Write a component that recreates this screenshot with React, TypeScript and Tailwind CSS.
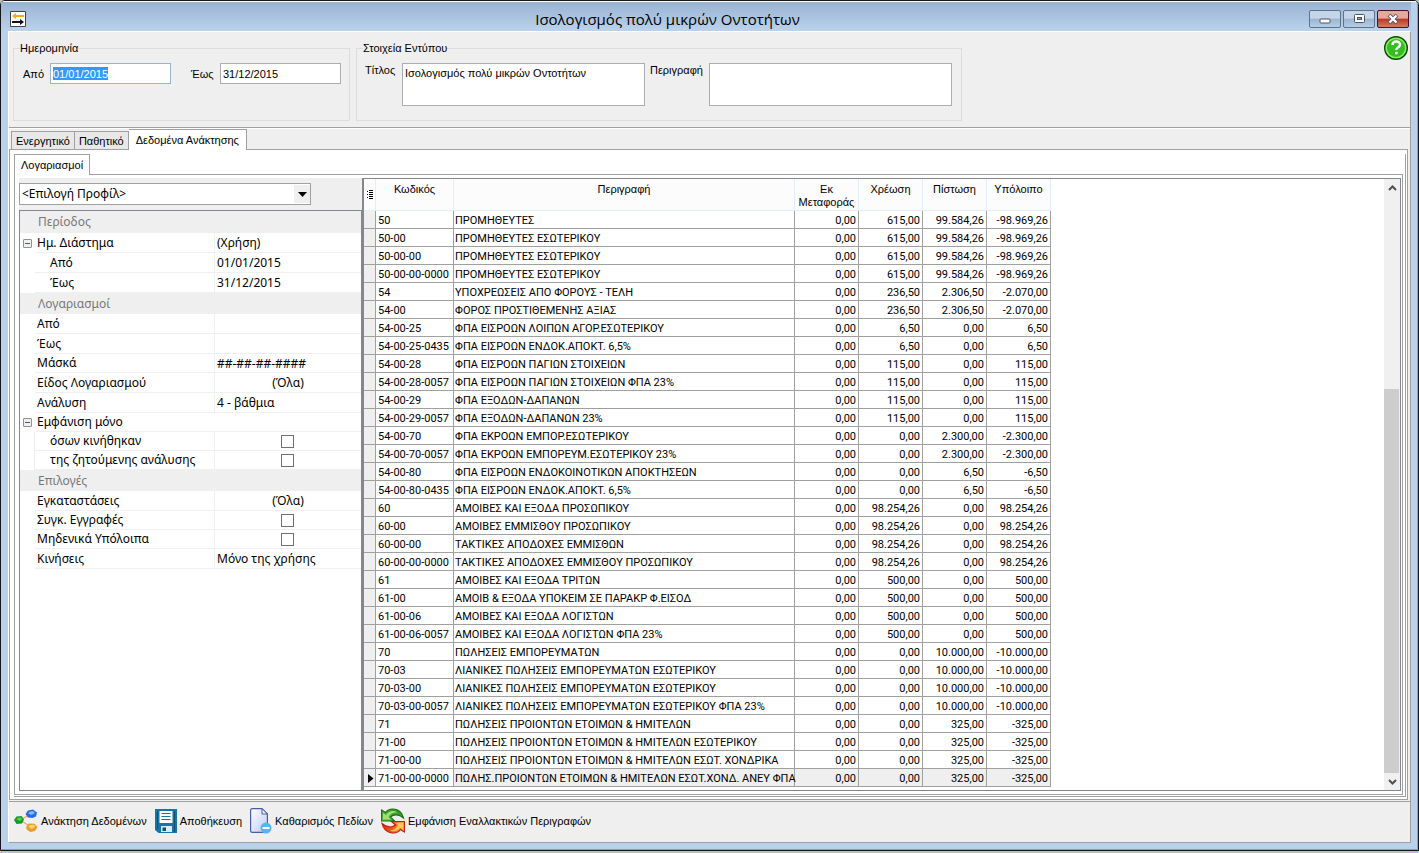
import type { ReactNode } from "react";

type Account = [code: string, name: string, debit: string, credit: string, balance: string];

const ACCOUNTS: Account[] = [
  ["50", "ΠΡΟΜΗΘΕΥΤΕΣ", "615,00", "99.584,26", "-98.969,26"],
  ["50-00", "ΠΡΟΜΗΘΕΥΤΕΣ ΕΣΩΤΕΡΙΚΟΥ", "615,00", "99.584,26", "-98.969,26"],
  ["50-00-00", "ΠΡΟΜΗΘΕΥΤΕΣ ΕΣΩΤΕΡΙΚΟΥ", "615,00", "99.584,26", "-98.969,26"],
  ["50-00-00-0000", "ΠΡΟΜΗΘΕΥΤΕΣ ΕΣΩΤΕΡΙΚΟΥ", "615,00", "99.584,26", "-98.969,26"],
  ["54", "ΥΠΟΧΡΕΩΣΕΙΣ ΑΠΟ ΦΟΡΟΥΣ - ΤΕΛΗ", "236,50", "2.306,50", "-2.070,00"],
  ["54-00", "ΦΟΡΟΣ ΠΡΟΣΤΙΘΕΜΕΝΗΣ ΑΞΙΑΣ", "236,50", "2.306,50", "-2.070,00"],
  ["54-00-25", "ΦΠΑ ΕΙΣΡΟΩΝ ΛΟΙΠΩΝ ΑΓΟΡ.ΕΣΩΤΕΡΙΚΟΥ", "6,50", "0,00", "6,50"],
  ["54-00-25-0435", "ΦΠΑ ΕΙΣΡΟΩΝ ΕΝΔΟΚ.ΑΠΟΚΤ. 6,5%", "6,50", "0,00", "6,50"],
  ["54-00-28", "ΦΠΑ ΕΙΣΡΟΩΝ ΠΑΓΙΩΝ ΣΤΟΙΧΕΙΩΝ", "115,00", "0,00", "115,00"],
  ["54-00-28-0057", "ΦΠΑ ΕΙΣΡΟΩΝ ΠΑΓΙΩΝ ΣΤΟΙΧΕΙΩΝ ΦΠΑ 23%", "115,00", "0,00", "115,00"],
  ["54-00-29", "ΦΠΑ ΕΞΟΔΩΝ-ΔΑΠΑΝΩΝ", "115,00", "0,00", "115,00"],
  ["54-00-29-0057", "ΦΠΑ ΕΞΟΔΩΝ-ΔΑΠΑΝΩΝ 23%", "115,00", "0,00", "115,00"],
  ["54-00-70", "ΦΠΑ ΕΚΡΟΩΝ ΕΜΠΟΡ.ΕΣΩΤΕΡΙΚΟΥ", "0,00", "2.300,00", "-2.300,00"],
  ["54-00-70-0057", "ΦΠΑ ΕΚΡΟΩΝ ΕΜΠΟΡΕΥΜ.ΕΣΩΤΕΡΙΚΟΥ 23%", "0,00", "2.300,00", "-2.300,00"],
  ["54-00-80", "ΦΠΑ ΕΙΣΡΟΩΝ ΕΝΔΟΚΟΙΝΟΤΙΚΩΝ ΑΠΟΚΤΗΣΕΩΝ", "0,00", "6,50", "-6,50"],
  ["54-00-80-0435", "ΦΠΑ ΕΙΣΡΟΩΝ ΕΝΔΟΚ.ΑΠΟΚΤ. 6,5%", "0,00", "6,50", "-6,50"],
  ["60", "ΑΜΟΙΒΕΣ ΚΑΙ ΕΞΟΔΑ ΠΡΟΣΩΠΙΚΟΥ", "98.254,26", "0,00", "98.254,26"],
  ["60-00", "ΑΜΟΙΒΕΣ ΕΜΜΙΣΘΟΥ ΠΡΟΣΩΠΙΚΟΥ", "98.254,26", "0,00", "98.254,26"],
  ["60-00-00", "ΤΑΚΤΙΚΕΣ ΑΠΟΔΟΧΕΣ ΕΜΜΙΣΘΩΝ", "98.254,26", "0,00", "98.254,26"],
  ["60-00-00-0000", "ΤΑΚΤΙΚΕΣ ΑΠΟΔΟΧΕΣ ΕΜΜΙΣΘΟΥ ΠΡΟΣΩΠΙΚΟΥ", "98.254,26", "0,00", "98.254,26"],
  ["61", "ΑΜΟΙΒΕΣ ΚΑΙ ΕΞΟΔΑ ΤΡΙΤΩΝ", "500,00", "0,00", "500,00"],
  ["61-00", "ΑΜΟΙΒ & ΕΞΟΔΑ ΥΠΟΚΕΙΜ ΣΕ ΠΑΡΑΚΡ Φ.ΕΙΣΟΔ", "500,00", "0,00", "500,00"],
  ["61-00-06", "ΑΜΟΙΒΕΣ ΚΑΙ ΕΞΟΔΑ ΛΟΓΙΣΤΩΝ", "500,00", "0,00", "500,00"],
  ["61-00-06-0057", "ΑΜΟΙΒΕΣ ΚΑΙ ΕΞΟΔΑ ΛΟΓΙΣΤΩΝ ΦΠΑ 23%", "500,00", "0,00", "500,00"],
  ["70", "ΠΩΛΗΣΕΙΣ ΕΜΠΟΡΕΥΜΑΤΩΝ", "0,00", "10.000,00", "-10.000,00"],
  ["70-03", "ΛΙΑΝΙΚΕΣ ΠΩΛΗΣΕΙΣ ΕΜΠΟΡΕΥΜΑΤΩΝ ΕΣΩΤΕΡΙΚΟΥ", "0,00", "10.000,00", "-10.000,00"],
  ["70-03-00", "ΛΙΑΝΙΚΕΣ ΠΩΛΗΣΕΙΣ ΕΜΠΟΡΕΥΜΑΤΩΝ ΕΣΩΤΕΡΙΚΟΥ", "0,00", "10.000,00", "-10.000,00"],
  ["70-03-00-0057", "ΛΙΑΝΙΚΕΣ ΠΩΛΗΣΕΙΣ ΕΜΠΟΡΕΥΜΑΤΩΝ ΕΣΩΤΕΡΙΚΟΥ ΦΠΑ 23%", "0,00", "10.000,00", "-10.000,00"],
  ["71", "ΠΩΛΗΣΕΙΣ ΠΡΟΙΟΝΤΩΝ ΕΤΟΙΜΩΝ & ΗΜΙΤΕΛΩΝ", "0,00", "325,00", "-325,00"],
  ["71-00", "ΠΩΛΗΣΕΙΣ ΠΡΟΙΟΝΤΩΝ ΕΤΟΙΜΩΝ & ΗΜΙΤΕΛΩΝ ΕΣΩΤΕΡΙΚΟΥ", "0,00", "325,00", "-325,00"],
  ["71-00-00", "ΠΩΛΗΣΕΙΣ ΠΡΟΙΟΝΤΩΝ ΕΤΟΙΜΩΝ & ΗΜΙΤΕΛΩΝ ΕΣΩΤ. ΧΟΝΔΡΙΚΑ", "0,00", "325,00", "-325,00"],
  ["71-00-00-0000", "ΠΩΛΗΣ.ΠΡΟΙΟΝΤΩΝ ΕΤΟΙΜΩΝ & ΗΜΙΤΕΛΩΝ ΕΣΩΤ.ΧΟΝΔ. ΑΝΕΥ ΦΠΑ", "0,00", "325,00", "-325,00"],
];

interface Property {
  id: string;
  label: string;
  kind: "section" | "group" | "text" | "center" | "check";
  value?: string;
  child?: boolean;
  short?: boolean;
}

const PROPERTIES: Property[] = [
  { id: "s-period", label: "Περίοδος", kind: "section" },
  { id: "range", label: "Ημ. Διάστημα", kind: "group", value: "(Χρήση)" },
  { id: "range-from", label: "Από", kind: "text", value: "01/01/2015", child: true },
  { id: "range-to", label: "Έως", kind: "text", value: "31/12/2015", child: true },
  { id: "s-accounts", label: "Λογαριασμοί", kind: "section" },
  { id: "acc-from", label: "Από", kind: "text", value: "" },
  { id: "acc-to", label: "Έως", kind: "text", value: "" },
  { id: "mask", label: "Μάσκά", kind: "text", value: "##-##-##-####", short: true },
  { id: "acc-kind", label: "Είδος Λογαριασμού", kind: "center", value: "(Όλα)" },
  { id: "level", label: "Ανάλυση", kind: "text", value: "4 - βάθμια" },
  { id: "only", label: "Εμφάνιση μόνο", kind: "group", short: true },
  { id: "moved", label: "όσων κινήθηκαν", kind: "check", child: true, short: true },
  { id: "requested", label: "της ζητούμενης ανάλυσης", kind: "check", child: true, short: true },
  { id: "s-options", label: "Επιλογές", kind: "section" },
  { id: "sites", label: "Εγκαταστάσεις", kind: "center", value: "(Όλα)" },
  { id: "merged", label: "Συγκ. Εγγραφές", kind: "check", short: true },
  { id: "zero", label: "Μηδενικά Υπόλοιπα", kind: "check", short: true },
  { id: "moves", label: "Κινήσεις", kind: "text", value: "Μόνο της χρήσης" },
];

function PropertyRow({ item }: { item: Property }) {
  if (item.kind === "section") {
    return (
      <h3 className="flex h-[21px] shrink-0 items-center bg-[#efefef] pl-[18px] text-[#777] first:h-[22px]">
        {item.label}
      </h3>
    );
  }
  return (
    <div className={`flex shrink-0 items-stretch ${item.short ? "h-[19px]" : "h-5"}`}>
      {item.child ? (
        <span className={`w-[15px] border-r ${item.kind === "check" ? "border-[#efefef]" : "border-transparent"}`} />
      ) : (
        <span className="flex w-[15px] items-center pl-[3px]">
          {item.kind === "group" && (
            <button type="button" aria-label={item.label} className="flex size-[9px] items-center justify-center rounded-[1px] border border-[#919191] bg-[#f0f0f0]">
              <span className="h-px w-[5px] bg-[#3c5aa0]" />
            </button>
          )}
        </span>
      )}
      <label
        htmlFor={item.id}
        className={`flex w-[180px] min-w-0 items-center border-b border-[#efefef] whitespace-nowrap ${item.child ? "pl-[15px]" : "pl-[2px]"} ${item.id === "only" ? "" : "border-r"}`}
      >
        {item.label}
      </label>
      <div className="flex min-w-0 flex-1 items-center border-b border-[#efefef]">
        {item.kind === "check" ? (
          <div className="flex flex-1 justify-center pr-[2px]">
            <input id={item.id} type="checkbox" className="size-[13px] appearance-none border border-[#707070] bg-white" />
          </div>
        ) : (
          <input
            id={item.id}
            readOnly
            defaultValue={item.value}
            className={`h-full w-full min-w-0 px-[2px] outline-none ${item.kind === "center" ? "text-center" : ""}`}
          />
        )}
      </div>
    </div>
  );
}

function AccountsTable() {
  const head = "border-r border-b border-[#e2edf8] bg-[#fcfcfc] p-0 pt-1 align-top font-normal leading-[13px]";
  const cell = "border-r border-b border-[#a0a0a0] p-0 pt-[2px] whitespace-nowrap";
  return (
    <table className="w-[687px] table-fixed border-separate border-spacing-0 text-[11px] leading-[15px]">
      <colgroup>
        <col className="w-[12px]" />
        <col className="w-[78px]" />
        <col className="w-[341px]" />
        <col className="w-[64px]" />
        <col className="w-[64px]" />
        <col className="w-[64px]" />
        <col className="w-[64px]" />
      </colgroup>
      <thead>
        <tr className="h-8">
          <th className="border-r border-b border-[#e2edf8] bg-[#fcfcfc] p-0 align-middle">
            <svg width="7" height="9" viewBox="0 0 7 9" className="ml-[3px]" shapeRendering="crispEdges">
              <path d="M0 1h1v1h-1zM2 0h4v1h-4zM2 2h4v1h-4zM0 4h1v1h-1zM2 4h4v1h-4zM2 6h4v1h-4zM0 7h1v1h-1zM2 8h4v1h-4z" />
            </svg>
          </th>
          <th className={head}>Κωδικός</th>
          <th className={head}>Περιγραφή</th>
          <th className={head}>Εκ Μεταφοράς</th>
          <th className={head}>Χρέωση</th>
          <th className={head}>Πίστωση</th>
          <th className={head}>Υπόλοιπο</th>
        </tr>
      </thead>
      <tbody className="font-['Roboto','Noto_Sans',sans-serif]">
        {ACCOUNTS.map(([code, name, debit, credit, balance], i) => {
          const current = i === ACCOUNTS.length - 1;
          const tone = current ? "bg-[#efefef]" : "bg-white";
          return (
            <tr key={code} className="h-[18px]">
              <td className={`${cell} bg-[#efefef]`}>
                {current && (
                  <svg width="6" height="9" viewBox="0 0 6 9" className="ml-1 block">
                    <path d="M0 0l5.5 4.5L0 9z" />
                  </svg>
                )}
              </td>
              <td className={`${cell} bg-white pl-[2px]`}>{code}</td>
              <td className={`${cell} ${tone} pl-px`}>{name}</td>
              <td className={`${cell} ${tone} pr-[2px] text-right`}>0,00</td>
              <td className={`${cell} ${tone} pr-[2px] text-right`}>{debit}</td>
              <td className={`${cell} ${tone} pr-[2px] text-right`}>{credit}</td>
              <td className={`${cell} ${tone} pr-[2px] text-right`}>{balance}</td>
            </tr>
          );
        })}
      </tbody>
    </table>
  );
}

function Scrollbar() {
  return (
    <div className="flex w-4 shrink-0 flex-col bg-[#f0f0f0]">
      <button type="button" aria-label="Πάνω" className="flex h-[18px] items-center justify-center">
        <svg width="9" height="6" viewBox="0 0 9 6" fill="none" stroke="#505050" strokeWidth="2">
          <path d="M1 5l3.500-3.500L8 5" />
        </svg>
      </button>
      <div className="flex-[192]" />
      <div className="mr-px flex-[385] bg-[#cdcdcd]" />
      <button type="button" aria-label="Κάτω" className="flex h-[17px] items-center justify-center">
        <svg width="9" height="6" viewBox="0 0 9 6" fill="none" stroke="#505050" strokeWidth="2">
          <path d="M1 1l3.500 3.500L8 1" />
        </svg>
      </button>
    </div>
  );
}

function RetrieveIcon() {
  return (
    <svg width="24" height="24" viewBox="0 0 24 24">
      <path d="M6 11L17 5M6 11l11 7" stroke="#f0a868" strokeWidth="1.400" />
      <path d="M0 11l2.500-3.500 5-.5L10 10.500 8 14.500l-5.500.5z" fill="#179a2c" />
      <path d="M2.500 10.500l1.500-1.800 3-.2L8 10.500 6 12z" fill="#4fd44c" />
      <path d="M11.500 5L14 1.500 19 .5l4 3-1 4L18.500 9 14 8.500z" fill="#2a6ae0" />
      <path d="M14 4.500L16 2.500l3-.5 2 2L17.500 6z" fill="#7db8ff" />
      <path d="M12 18l2.500-3.500 6 .3 3 3.200-2.500 4-4.500 1-3.500-2z" fill="#e59f2d" />
      <path d="M14.500 17.500l1.500-1.500 4-.2 1.300 2L17.500 20z" fill="#ffd070" />
    </svg>
  );
}

function SaveIcon() {
  return (
    <svg width="22" height="24" viewBox="0 0 22 24">
      <path d="M0 0h22v24H3.500L0 21z" fill="#1a74a3" />
      <path d="M2.500 2v18M19.500 2v21" stroke="#0d4f7a" fill="none" />
      <path d="M4.500 2h13v12h-13z" fill="#fff" />
      <path d="M6.500 4.500h9M6.500 7.500h9M6.500 10.500h9" stroke="#1a74a3" />
      <path d="M6 17h11v6H6z" fill="#d9edf7" />
      <path d="M7.500 18.500h3.500V22H7.500z" fill="#14506f" />
    </svg>
  );
}

function ClearIcon() {
  return (
    <svg width="22" height="26" viewBox="0 0 22 26">
      <defs>
        <linearGradient id="sheet" x1="0" y1="0" x2="1" y2="1">
          <stop offset="0" stopColor="#ffffff" />
          <stop offset="1" stopColor="#bccaf5" />
        </linearGradient>
      </defs>
      <path d="M2.500.6h9.500l5.400 5.400v18.400H2.500Q.6 24.400.6 22.500v-20Q.6.600 2.500.600z" fill="url(#sheet)" stroke="#4a5ca8" strokeWidth="1.200" />
      <path d="M12 .6V6h5.400z" fill="#eef1ff" stroke="#4a5ca8" />
      <circle cx="16" cy="20" r="5.500" fill="#54b4f6" />
      <path d="M12.500 20h7" stroke="#fff" strokeWidth="2" />
    </svg>
  );
}

function SwapIcon() {
  return (
    <svg width="24" height="26" viewBox="0 0 24 26">
      <defs>
        <linearGradient id="swap-warm" x1="0" y1="0" x2="1" y2="0">
          <stop offset="0" stopColor="#e02a12" />
          <stop offset=".45" stopColor="#f25a22" />
          <stop offset="1" stopColor="#fbb438" />
        </linearGradient>
        <linearGradient id="swap-green" x1="0" y1="1" x2="1" y2="0">
          <stop offset="0" stopColor="#5cc840" />
          <stop offset="1" stopColor="#2a8a1c" />
        </linearGradient>
      </defs>
      <path d="M22.500 10C20-.5 8.500-1 4.500 4.500L.6 2v11h12.900L9.500 9C12.500 6 18 6 22.500 10z" fill="url(#swap-green)" stroke="#1c6b12" strokeWidth="1.100" />
      <path d="M2 11.500V5l3 2c3-4.500 8-5 11.500-2.500C12.500 4 9 5.500 7.500 9L10 11.500z" fill="#98e274" />
      <path d="M1 15.500C3.500 26.500 15.500 27 19.500 21.500l3.900 2.500V13.500H10.500l4 3.500C11.500 20 5.500 19.500 1 15.500z" fill="url(#swap-warm)" stroke="#c01c0c" strokeWidth="1.100" />
      <path d="M22 15v6.500l-3-2c-2.500 3.500-6.500 4.500-10 3 4-.2 7-2 8-5.500l-2-2z" fill="#fdc858" />
    </svg>
  );
}

function ToolButton({ icon, children }: { icon: ReactNode; children: ReactNode }) {
  return (
    <button type="button" className="flex items-center gap-[3px] whitespace-nowrap">
      {icon}
      {children}
    </button>
  );
}

function CaptionButton({ label, close, children }: { label: string; close?: boolean; children: ReactNode }) {
  return (
    <button
      type="button"
      aria-label={label}
      className={`flex h-[18px] w-8 items-center justify-center rounded-[2px] border ${
        close
          ? "border-[#431422] bg-linear-to-b from-[#e8a79b] from-45% via-[#b8341c] via-50% to-[#d07c66]"
          : "border-[#5f728c] bg-linear-to-b from-[#c3d6ea] from-45% via-[#9cb6d2] via-50% to-[#b5cde6]"
      }`}
    >
      <svg width="14" height="10" viewBox="0 0 14 10">
        {children}
      </svg>
    </button>
  );
}

function TitleBar() {
  return (
    <header className="flex h-[29px] items-center bg-linear-to-b from-[#98b3d2] to-[#bbd2ec] pt-[5px] pr-[2px] pl-[9px]">
      <svg width="16" height="16" viewBox="0 0 16 16">
        <path d="M.5.500h15v15H.5z" fill="#fff" stroke="#444" />
        <path d="M2 5l4-3v2h8v2H6v2z" fill="#f9a71c" />
        <path d="M14 11l-4-3v2H2v2h8v2z" fill="#111" />
      </svg>
      <h1 className="flex-1 text-center font-['Open_Sans','Noto_Sans',sans-serif] text-[15px] leading-5">
        Ισολογισμός πολύ μικρών Οντοτήτων
      </h1>
      <div className="flex gap-[2px]">
        <CaptionButton label="Ελαχιστοποίηση">
          <rect x="2" y="5" width="10" height="4" rx="1" fill="#fff" stroke="#4c5566" />
        </CaptionButton>
        <CaptionButton label="Μεγιστοποίηση">
          <rect x="2.500" y=".5" width="10" height="8" rx="1" fill="#fff" stroke="#4c5566" />
          <rect x="5.500" y="3.500" width="4" height="2" fill="#8aa7cc" stroke="#4c5566" />
        </CaptionButton>
        <CaptionButton label="Κλείσιμο" close>
          <path d="M3 1l8 8M11 1L3 9" stroke="#4c5566" strokeWidth="4" />
          <path d="M3.500 1.500l7 7M10.500 1.500l-7 7" stroke="#fff" strokeWidth="2.400" />
        </CaptionButton>
      </div>
    </header>
  );
}

function FormHeader() {
  const group = "min-w-0 border border-[#dcdcdc] p-0";
  const area = "h-[43px] w-[243px] resize-none border border-[#abadb3] bg-white px-[2px] pt-[2px] leading-[14px] outline-none";
  return (
    <section className="flex items-start border-b border-[#a0a0a0] pt-[9px] pb-[6px] pl-1">
      <fieldset className={`${group} h-20 w-[337px]`}>
        <legend className="ml-[6px] leading-[14px]">Ημερομηνία</legend>
        <div className="mt-2 flex items-center pl-[9px]">
          <label htmlFor="from" className="w-[27px]">Από</label>
          <div className="flex h-[21px] w-[121px] items-center border border-[#98b4d0] bg-white pl-[2px]">
            <input id="from" defaultValue="01/01/2015" className="field-sizing-content h-[13px] bg-[#3399ff] text-white outline-none" />
          </div>
          <label htmlFor="to" className="ml-5 w-[29px]">Έως</label>
          <input id="to" defaultValue="31/12/2015" className="h-[21px] w-[121px] border border-[#abadb3] bg-white px-[2px] outline-none" />
        </div>
      </fieldset>
      <fieldset className={`${group} ml-[6px] h-20 w-[606px]`}>
        <legend className="ml-[6px] leading-[14px]">Στοιχεία Εντύπου</legend>
        <div className="mt-2 flex items-start pl-2">
          <label htmlFor="title" className="w-[37px] leading-[14px]">Τίτλος</label>
          <textarea id="title" defaultValue="Ισολογισμός πολύ μικρών Οντοτήτων" className={area} />
          <label htmlFor="description" className="ml-[5px] w-[59px] leading-[14px]">Περιγραφή</label>
          <textarea id="description" className={area} />
        </div>
      </fieldset>
      <button type="button" aria-label="Βοήθεια" className="-mt-[5px] mr-[2px] ml-auto">
        <svg width="24" height="24" viewBox="0 0 24 24">
          <circle cx="12" cy="12" r="11.300" fill="#7ef05a" stroke="#0a4a08" strokeWidth="1.400" />
          <circle cx="12" cy="12" r="9" fill="#35bd22" />
          <path d="M8.500 9c0-4.500 7.500-4.500 7.500-.5 0 3-3.700 2.700-3.700 5.500" fill="none" stroke="#fff" strokeWidth="2.400" />
          <path d="M11 15.800h2.600v2.400H11z" fill="#fff" />
        </svg>
      </button>
    </section>
  );
}

export default function App() {
  return (
    <div className="flex h-screen min-h-[853px] flex-col bg-[#bfbfbf] pb-[2px] font-['Liberation_Sans',Arial,sans-serif] text-[11px] leading-[14px] text-black">
      <div className="flex min-h-0 flex-1 flex-col rounded-t-[5px] border border-[#14161c] bg-[#b9d1ea]">
        <div className="flex min-h-0 flex-1 flex-col rounded-t-[4px] border-t border-r border-b border-t-white border-r-[#35c3dc] border-b-[#35c3dc] pr-[6px] pb-[6px] pl-[7px]">
          <div className="-mr-[6px] -ml-[7px] pr-[6px] pl-0">
            <TitleBar />
          </div>
          <div className="flex min-h-0 flex-1 flex-col border-t border-r border-b border-l border-t-white border-r-[#a0a0a0] border-b-[#a0a0a0] border-l-white bg-[#efefef]">
            <FormHeader />
            <main className="flex min-h-0 flex-1 flex-col border-t border-white pr-[2px] pb-px">
              <nav role="tablist" className="flex items-end pl-[2px]">
                <button role="tab" className="h-[18px] border border-b-0 border-[#a0a0a0] bg-[#e8e8e8] px-1">Ενεργητικό</button>
                <button role="tab" className="h-[18px] border border-b-0 border-l-0 border-[#a0a0a0] bg-[#e8e8e8] px-1">Παθητικό</button>
                <button role="tab" aria-selected="true" className="relative -mb-px h-[21px] border border-b-0 border-l-0 border-[#a0a0a0] bg-white px-[7px] pb-px">
                  Δεδομένα Ανάκτησης
                </button>
              </nav>
              <div className="flex min-h-0 flex-1 flex-col border border-[#a0a0a0] bg-white pt-1 pr-px pb-[2px] pl-1">
                <div className="flex min-h-0 flex-1 flex-col border-r border-b border-[#a0a0a0] pr-[2px] pb-px">
                  <nav role="tablist" className="flex">
                    <button role="tab" aria-selected="true" className="relative -mb-px h-[21px] border border-b-0 border-[#a0a0a0] bg-white px-[6px] pb-px">
                      Λογαριασμοί
                    </button>
                  </nav>
                  <div className="flex min-h-0 flex-1 border border-[#a0a0a0] py-[3px] pr-px pl-1">
                    <aside className="flex w-[343px] shrink-0 flex-col bg-[#efefef] font-['Noto_Sans','DejaVu_Sans',sans-serif] text-[12px]">
                      <div className="relative mt-[5px] h-[22px] w-[292px]">
                        <select aria-label="Προφίλ" className="h-full w-full appearance-none border border-[#a0a0a0] bg-white pl-[2px] outline-none">
                          <option>&lt;Επιλογή Προφίλ&gt;</option>
                        </select>
                        <span className="pointer-events-none absolute inset-y-[2px] right-px flex w-4 items-center justify-center bg-[#efefef]">
                          <svg width="9" height="5" viewBox="0 0 9 5">
                            <path d="M0 0h9L4.500 5z" />
                          </svg>
                        </span>
                      </div>
                      <div className="mt-[5px] flex min-h-0 flex-1 flex-col border border-[#828790] bg-white">
                        {PROPERTIES.map((item) => (
                          <PropertyRow key={item.id} item={item} />
                        ))}
                      </div>
                    </aside>
                    <section className="flex min-w-0 flex-1 border border-l-2 border-[#828790] bg-white">
                      <div className="min-w-0 flex-1 overflow-hidden">
                        <AccountsTable />
                      </div>
                      <Scrollbar />
                    </section>
                  </div>
                </div>
              </div>
            </main>
            <footer className="flex h-[41px] shrink-0 items-center gap-2 border-t border-[#a0a0a0] pb-[2px] pl-[5px]">
              <ToolButton icon={<RetrieveIcon />}>Ανάκτηση Δεδομένων</ToolButton>
              <ToolButton icon={<SaveIcon />}>Αποθήκευση</ToolButton>
              <ToolButton icon={<ClearIcon />}>Καθαρισμός Πεδίων</ToolButton>
              <ToolButton icon={<SwapIcon />}>Εμφάνιση Εναλλακτικών Περιγραφών</ToolButton>
            </footer>
          </div>
        </div>
      </div>
    </div>
  );
}
